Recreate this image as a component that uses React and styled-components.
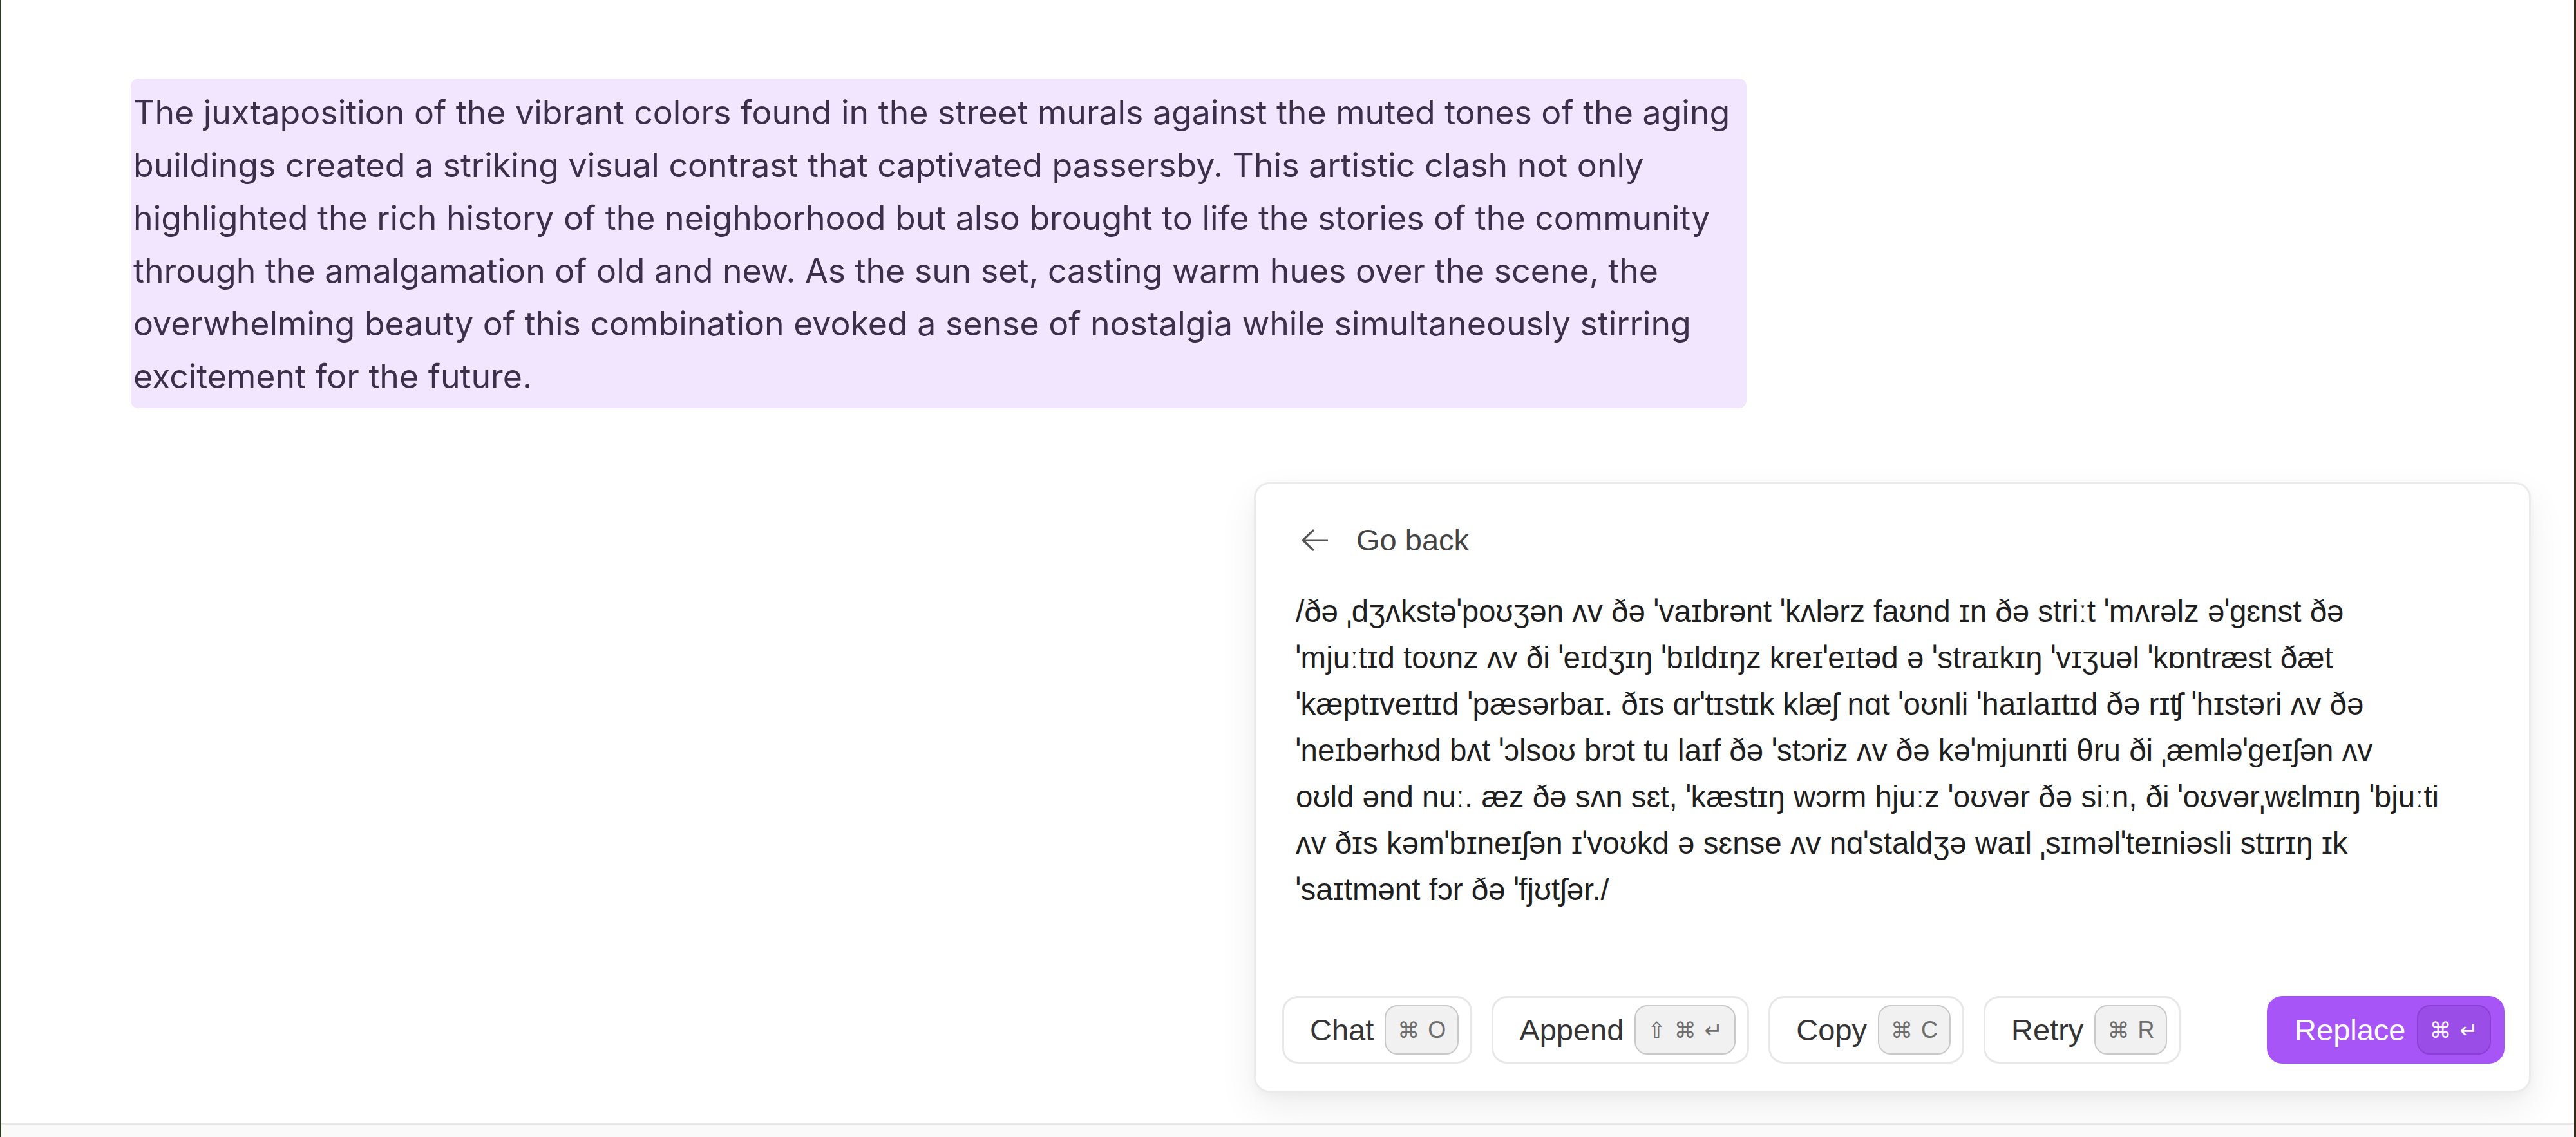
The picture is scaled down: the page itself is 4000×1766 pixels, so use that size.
import React from 'react';
import styled, {createGlobalStyle} from 'styled-components';

const GlobalStyle = createGlobalStyle`
    html, body {
        margin: 0;
        padding: 0;
        background: #ffffff;
    }
`;

const Frame = styled.div`
    width: 4000px;
    height: 1766px;
    box-sizing: border-box;
    display: flex;
    flex-direction: column;
    border-left: 2px solid #2b3722;
    border-right: 3px solid #35291e;
    background: #ffffff;
    overflow: hidden;
`;

const Editor = styled.div`
    flex: 1;
    padding: 122px 0 0 201px;
    box-sizing: border-box;
`;

const Selection = styled.p`
    margin: 0;
    width: 2509px;
    box-sizing: border-box;
    padding: 11px 4px 9px;
    border-radius: 12px;
    background: #f1e6fd;
    color: #3c2f4b;
    font-family: Inter, "Noto Sans", sans-serif;
    font-size: 51.8px;
    line-height: 82px;
    white-space: nowrap;
`;

const Line = styled.span`
    display: block;
`;

const Popover = styled.div`
    margin: 115px 0 0 1744px;
    width: 1983px;
    height: 948px;
    box-sizing: border-box;
    display: flex;
    flex-direction: column;
    border: 3px solid #ebebeb;
    border-radius: 24px;
    background: #ffffff;
    box-shadow: 0 24px 60px rgba(0, 0, 0, 0.07), 0 6px 16px rgba(0, 0, 0, 0.03);
    font-family: "Liberation Sans", Arial, "DejaVu Sans", sans-serif;
`;

const BackLink = styled.div`
    display: flex;
    align-items: center;
    gap: 44px;
    padding: 63px 0 0 70px;
    height: 48px;
    color: #444444;
    font-size: 47px;
    line-height: 48px;
`;

const Transcript = styled.div`
    margin-top: 50px;
    padding: 0 40px 0 62px;
    color: #1f1f1f;
    font-size: 47.5px;
    line-height: 70px;
    white-space: nowrap;
`;

// stress ticks: Liberation Sans lacks them, the fallback is too wide
const Stress = styled.span`
    font-family: "Noto Sans", "DejaVu Sans", sans-serif;
`;

const Actions = styled.div`
    margin-top: auto;
    display: flex;
    align-items: center;
    gap: 30px;
    padding: 0 38px 42px 41px;
`;

const Action = styled.button`
    display: flex;
    align-items: center;
    gap: 17px;
    height: 105px;
    box-sizing: border-box;
    margin: 0;
    padding: 0 18px 0 40px;
    border: 3px solid ${p => (p.$primary ? '#a855f7' : '#e8e8e8')};
    border-radius: 24px;
    background: ${p => (p.$primary ? '#a855f7' : '#ffffff')};
    color: ${p => (p.$primary ? '#ffffff' : '#353535')};
    font-family: "Liberation Sans", Arial, sans-serif;
    font-size: 47px;
    margin-left: ${p => (p.$primary ? 'auto' : '0')};
    cursor: pointer;
`;

const Kbd = styled.kbd`
    display: flex;
    align-items: center;
    gap: 13px;
    height: 77px;
    box-sizing: border-box;
    padding: 0 18px;
    border: 2px solid ${p => (p.$primary ? '#8a3fd6' : '#c9c9c9')};
    border-radius: 20px;
    background: ${p => (p.$primary ? '#9b4de8' : '#f1f1f1')};
    color: ${p => (p.$primary ? '#fbf5ff' : '#6e6e6e')};
    font-family: "Liberation Sans", "DejaVu Sans", sans-serif;
    font-size: 36px;
`;

const Glyph = styled.span`
    font-family: "DejaVu Sans", sans-serif;
    font-size: 34px;
`;

const Footer = styled.div`
    height: 22px;
    box-sizing: border-box;
    border-top: 3px solid #e7e7e7;
    background: #fafafa;
`;

const ArrowLeft = () => (
    <svg width="42" height="34" viewBox="0 0 42 34" fill="none">
        <path d="M3 17H41M19 2L3 17L19 32" stroke="#555555" strokeWidth="3.2" strokeLinecap="round" strokeLinejoin="round" />
    </svg>
);

const sourceLines = [
    'The juxtaposition of the vibrant colors found in the street murals against the muted tones of the aging',
    'buildings created a striking visual contrast that captivated passersby. This artistic clash not only',
    'highlighted the rich history of the neighborhood but also brought to life the stories of the community',
    'through the amalgamation of old and new. As the sun set, casting warm hues over the scene, the',
    'overwhelming beauty of this combination evoked a sense of nostalgia while simultaneously stirring',
    'excitement for the future.',
];

const ipaLines = [
    '/ðə ˌdʒʌkstəˈpoʊʒən ʌv ðə ˈvaɪbrənt ˈkʌlərz faʊnd ɪn ðə striːt ˈmʌrəlz əˈɡɛnst ðə',
    'ˈmjuːtɪd toʊnz ʌv ði ˈeɪdʒɪŋ ˈbɪldɪŋz kreɪˈeɪtəd ə ˈstraɪkɪŋ ˈvɪʒuəl ˈkɒntræst ðæt',
    'ˈkæptɪveɪtɪd ˈpæsərbaɪ. ðɪs ɑrˈtɪstɪk klæʃ nɑt ˈoʊnli ˈhaɪlaɪtɪd ðə rɪʧ ˈhɪstəri ʌv ðə',
    'ˈneɪbərhʊd bʌt ˈɔlsoʊ brɔt tu laɪf ðə ˈstɔriz ʌv ðə kəˈmjunɪti θru ði ˌæmləˈɡeɪʃən ʌv',
    'oʊld ənd nuː. æz ðə sʌn sɛt, ˈkæstɪŋ wɔrm hjuːz ˈoʊvər ðə siːn, ði ˈoʊvərˌwɛlmɪŋ ˈbjuːti',
    'ʌv ðɪs kəmˈbɪneɪʃən ɪˈvoʊkd ə sɛnse ʌv nɑˈstaldʒə waɪl ˌsɪməlˈteɪniəsli stɪrɪŋ ɪk',
    'ˈsaɪtmənt fɔr ðə ˈfjʊtʃər./',
];

const renderIpa = line => line.split(/([ˈˌ])/).map((part, i) =>
    part === 'ˈ' || part === 'ˌ' ? <Stress key={i}>{part}</Stress> : part);

const actions = [
    {label: 'Chat', keys: ['⌘', 'O']},
    {label: 'Append', keys: ['⇧', '⌘', '↵']},
    {label: 'Copy', keys: ['⌘', 'C']},
    {label: 'Retry', keys: ['⌘', 'R']},
    {label: 'Replace', keys: ['⌘', '↵'], primary: true},
];

const isSymbol = k => k.charCodeAt(0) > 0x2000;

const App = () => {
    return <>
        <GlobalStyle />
        <Frame>
            <Editor>
                <Selection>
                    {sourceLines.map(line => <Line key={line}>{line}</Line>)}
                </Selection>
                <Popover>
                    <BackLink>
                        <ArrowLeft />
                        <span>Go back</span>
                    </BackLink>
                    <Transcript>
                        {ipaLines.map(line => <Line key={line}>{renderIpa(line)}</Line>)}
                    </Transcript>
                    <Actions>
                        {actions.map(action => (
                            <Action key={action.label} $primary={action.primary}>
                                {action.label}
                                <Kbd $primary={action.primary}>
                                    {action.keys.map(k => isSymbol(k)
                                        ? <Glyph key={k}>{k}</Glyph>
                                        : <span key={k}>{k}</span>)}
                                </Kbd>
                            </Action>
                        ))}
                    </Actions>
                </Popover>
            </Editor>
            <Footer />
        </Frame>
    </>
}

export default App;
